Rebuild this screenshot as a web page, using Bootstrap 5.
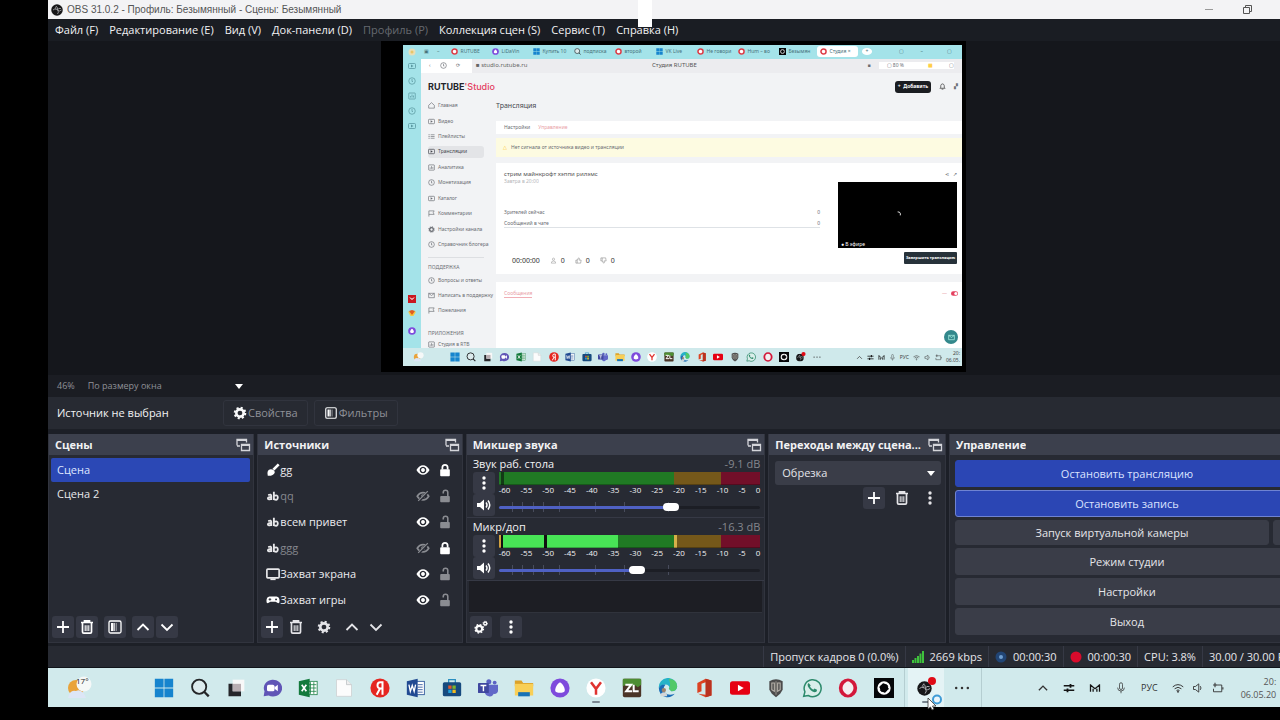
<!DOCTYPE html>
<html lang="ru">
<head>
<meta charset="utf-8">
<meta name="viewport" content="width=device-width, initial-scale=1">
<title>OBS 31.0.2</title>
<link href="https://cdn.jsdelivr.net/npm/bootstrap@5.3.0/dist/css/bootstrap.min.css" rel="stylesheet">
<style>
:root{--ui:"Open Sans","Noto Sans",sans-serif;--dock:#272a33;--head:#3c404d;--key:#3a3d48}
html,body{background:#000}
body{font-family:var(--ui);font-size:11px;line-height:16px;color:#f2f2f4;overflow:hidden;min-height:100vh}
svg{display:block;flex:none}
.ic{width:16px;height:16px}
.ic-m{width:14px;height:14px}
.ic-s{width:12px;height:12px}
.ic-l{width:20px;height:20px}
button{font-family:inherit}
.screen{margin-left:48px;margin-right:-26px;position:relative}
.titlebar{background:#f3f3f5;color:#555;height:19px;font:10px/16px "Liberation Sans",sans-serif;padding:0 40px 0 3px}
.titlebar .win{width:38px;height:19px;background:none;border:0;padding:0}
.menus{background:#1a1d23;height:22px;padding-left:7px;gap:11px}
.menus a{color:#f2f2f4;text-decoration:none;white-space:nowrap}
.menus a.off{color:#666a70}
.white-tab{position:absolute;left:590px;top:0;width:14px;height:27px;background:#fff}
.stage{background:#15171c;padding:0 7px 3px 0}
.canvas-box{background:#000;padding:4px 4px 6px 22px;width:585px}
.zoombar{background:#1b1d23;height:22px;padding-left:9px;font-size:9px;color:#8f9197;gap:12px}
.zoombar select{background-color:transparent;color:#8f9197;border:0;font-size:9px;width:162px;padding:0 0 0 1px;line-height:16px;height:18px}
select.drop{background-image:url("data:image/svg+xml,%3Csvg xmlns='http://www.w3.org/2000/svg' viewBox='0 0 8 5'%3E%3Cpath d='M0 0h8L4 5z' fill='%23fff'/%3E%3C/svg%3E");background-size:8px 5px;background-repeat:no-repeat;background-position:right 6px center;box-shadow:none}
.srcbar{background:#272a32;height:33px;padding-left:9px;border-bottom:1px solid #1d2027;gap:6px}
.srcbar .tag{width:160px}
.ghost{background:#272a32;border:1px solid #31343e;color:#8e9097;border-radius:3px;height:26px;line-height:16px;padding:0 9px;display:flex;align-items:center;gap:1px}
.docks{background:#1c1f27;padding:4px 0 0;gap:3px;height:213px}
.dock{background:var(--dock);min-width:0;display:flex;flex-direction:column;border:solid #31343e;border-width:0 1px 1px}
.dock>header{background:var(--head);height:21px;flex:none;padding:0 2px 0 6px;font-weight:700;display:flex;align-items:center;justify-content:space-between;white-space:nowrap}
.dock>header span{overflow:hidden;text-overflow:ellipsis}
.d1{flex:206 1 0}.d2{flex:205 1 0}.d3{flex:300 1 0}.d4{flex:177 1 0}.d5{flex:358 1 0}
.scenes{padding:3px 3px 0 2px}
.scenes button{display:block;width:100%;height:24px;border:0;background:none;color:#e8e8ec;text-align:left;padding:0 6px;border-radius:2px}
.scenes button.on{background:#2b48b5;color:#dfe6ff}
.tools{height:29px;flex:none;padding:0 3px 1px;gap:2px}
.sq{width:22px;height:22px;border:0;border-radius:3px;background:none;color:#e4e4e8;padding:0;display:flex;align-items:center;justify-content:center}
.sq.key{background:#363945;color:#fff}
.sources{list-style:none;margin:0;padding:2px 10px 0 8px}
.sources li{height:26px;display:flex;align-items:center}
.sources .name{flex:1;color:#ececf0}
.sources .dim{color:#85878e}
.sources .ic-m+.ic-m{margin-left:8px}
.chan{height:63px;flex:none;padding:1px 4px 0 6px;border-bottom:1px solid #363945}
.chan .db{color:#85878e}
.meter{height:13px;display:flex}
.meter i{height:13px;box-shadow:inset 0 -7px 0 -6px #0004}
.scale{font-size:8px;line-height:10px;height:12px;display:flex;justify-content:space-between}
.vol{-webkit-appearance:none;appearance:none;width:100%;height:14px;display:block;margin:3px 0 0;background-color:transparent;background-image:linear-gradient(#484c5c,#484c5c),linear-gradient(#484c5c,#484c5c),linear-gradient(#484c5c,#484c5c),linear-gradient(#484c5c,#484c5c),linear-gradient(#484c5c,#484c5c),linear-gradient(#484c5c,#484c5c),linear-gradient(#484c5c,#484c5c),linear-gradient(#484c5c,#484c5c);background-size:1px 10px;background-repeat:no-repeat;background-position:5% 50%,9% 50%,13% 50%,17% 50%,23% 50%,37% 50%,48% 50%,65% 50%}
.vol::-webkit-slider-runnable-track{height:3px;border-radius:2px;background:linear-gradient(90deg,#4f61c4 var(--v),#1c1e25 var(--v))}
.vol::-webkit-slider-thumb{-webkit-appearance:none;width:16px;height:8px;margin-top:-3px;border-radius:4px;background:#fff}
.pit{background:#1d1e24;flex:1;margin:0 2px;border-bottom:1px solid #30333c}
.trans{padding:6px 4px 0 6px}
.trans select{background-color:var(--key);color:#e4e4e8;border:0;border-radius:3px;height:24px;width:100%;font-size:11px;line-height:16px;padding:0 7px}
.trans .keys{gap:6px;margin-top:2px}
.acts{padding:5px 6px 7px 5px;gap:3px;flex:1}
.act{flex:1;background:var(--key);border:1px solid var(--key);border-radius:3px;color:#e6e6ea;line-height:16px;padding:0;min-height:0;width:100%}
.act.on{background:#2b46b4;border-color:#2b46b4;color:#dbe3ff}
.act.sel{border-color:#6f83d2}
.act-pair{flex:1;display:flex;gap:4px;min-height:0}
.act.mini-key{flex:none;width:26px}
.status{background:#272a32;height:24px;border-top:3px solid #1d2027;color:#e6e6ea;white-space:nowrap}
.status div{padding:0 6px;border-left:1px solid #363945;display:flex;align-items:center;gap:6px}
.status div:last-child{padding-right:10px}
.taskbar{background:#d1eaec;height:40px;border-top:1px solid #10141a;padding-left:16px;color:#222}
.tb{width:36px;height:39px;border:0;background:none;padding:0;display:flex;align-items:center;justify-content:center;position:relative}
.tb.run::after{content:"";position:absolute;bottom:4px;left:14px;width:8px;height:2px;border-radius:1px;background:#7a8790}
.weather{width:82px}
.temp{position:absolute;left:12px;top:0;font-size:8px;line-height:10px}
.obsgrp{border:solid #b5ced1;border-width:0 1px;padding:0 1px 0 3px;margin-left:2px}
.obsgrp .tb.run{background:#e4f3f5}
.tray{color:#333;font-size:9px;margin-left:55px;gap:14px}
.tray .trio{gap:8px}
.clock{font-size:9px;line-height:13px;text-align:right;color:#555;margin-left:3px}
.cursor{position:absolute;left:879px;top:693px;width:18px;height:18px}
/* captured desktop shown in the preview */
.mini{background:#f2f3f5;color:#6b6e74;font-size:5px;line-height:7px;height:321px;overflow:hidden;font-family:"Noto Sans",sans-serif}
.mini svg{width:7px;height:7px}
.m-rail{width:18px;background:#a4e3e9;color:#5b99a2;padding:3px 0 13px}
.m-rail svg{width:8px;height:8px}
.m-rail .set{gap:7px;margin-top:6px}
.m-rail .set2{gap:6px}
.m-tabs{height:14px;background:#a4e3e9;padding:0 10px 0 3px;color:#47717a}
.m-tab{width:41px;display:flex;align-items:center;gap:3px;overflow:hidden;white-space:nowrap;padding-left:3px}
.m-tab.now{background:#fff;border-radius:3px;height:11px}
.m-addr{height:14px;background:#ececef;padding-right:8px}
.m-nav{width:51px;gap:9px}
.m-url{font-size:6px;color:#666;width:180px}
.m-side{width:75px;padding:8px 0 0 7px}
.m-logo{font:700 9px/12px Inter,sans-serif;color:#23242b}
.m-logo b{color:#e4405f;font-weight:500}
.m-side a{display:flex;align-items:center;gap:3px;height:15px;color:#6b6e74;text-decoration:none;white-space:nowrap}
.m-side nav{display:flex;flex-direction:column}
.m-side nav.top{padding-top:7px;height:158px;justify-content:space-between;margin-right:12px}
.m-side nav.top a{height:12px}
.m-side a.now{background:#e3e4e7;border-radius:3px;color:#44464d}
.m-sep{border-top:1px solid #dddfe2;margin:6px 12px 2px 0;padding-top:6px}
.m-h{font-size:7px;line-height:10px;color:#44464d;margin:8px 0 10px}
.m-white{background:#fff}
.m-tabrow{height:13px}
.m-card{height:111px;padding:4px 5px 0 8px}
.m-warn{background:#fdfbe1;height:19px;margin:4px 0 6px;padding-left:7px;gap:4px}
.m-add{background:#1b1d21;color:#fff;border:0;border-radius:3px;font-size:5px;line-height:7px;height:12px;width:36px;padding:0;font-weight:700}
.m-stop{background:#27323a;color:#fff;border:0;border-radius:1px;font-size:4px;line-height:7px;height:12px;width:53px;padding:0;font-weight:700;white-space:nowrap}
.m-info{width:316px}
.m-name{font-size:6px;color:#555}
.m-count{font-size:7px;line-height:10px;color:#333;gap:10px}
.m-video{background:#000;height:66px;width:119px;color:#fff;position:relative}
.m-video svg{position:absolute;left:57px;top:29px}
.m-live{position:absolute;left:3px;bottom:0}
.m-task{background:#cfe9eb;height:18px;padding:0 2px 0 8px;color:#444}
.m-icons{width:372px;margin-left:25px;display:flex;justify-content:space-between}
.m-icons svg{width:10px;height:10px}
.m-task .m-sun{width:14px;height:10px}
.m-chat{width:14px;height:14px;border-radius:50%;background:#33888c;border:0;padding:0;color:#bfe}
.pink{color:#e9a0a6}
</style>
</head>
<body>
<svg width="0" height="0" class="position-absolute" aria-hidden="true">
<defs>
<symbol id="plus" viewBox="0 0 16 16"><path d="M8 2v12M2 8h12" stroke="currentColor" stroke-width="1.800"/></symbol>
<symbol id="trash" viewBox="0 0 16 16"><path d="M2 3.500h12M5.500 3V1.800h5V3M3.500 4v9q0 1.200 1.200 1.200h6.600q1.200 0 1.200-1.200V4" fill="none" stroke="currentColor" stroke-width="1.700"/><path d="M6.200 6.200v5.800M8 6.200v5.800M9.800 6.200v5.800" stroke="currentColor" stroke-width="1.100"/></symbol>
<symbol id="filt" viewBox="0 0 16 16"><rect x="2" y="2" width="12" height="12" rx="1.500" fill="none" stroke="currentColor" stroke-width="1.300"/><path d="M4 4h2.500v8H4z" fill="currentColor"/><path d="M7.500 4v8" stroke="currentColor" stroke-width="1.500" opacity=".7"/><path d="M9.500 4v8" stroke="currentColor" opacity=".4"/></symbol>
<symbol id="up" viewBox="0 0 16 16"><path d="M2.500 11 8 5.500l5.500 5.500" fill="none" stroke="currentColor" stroke-width="1.800"/></symbol>
<symbol id="down" viewBox="0 0 16 16"><path d="M2.500 5.500 8 11l5.500-5.500" fill="none" stroke="currentColor" stroke-width="1.800"/></symbol>
<symbol id="gear" viewBox="0 0 16 16"><circle cx="8" cy="8" r="4.200" fill="none" stroke="currentColor" stroke-width="3"/><circle cx="8" cy="8" r="6" fill="none" stroke="currentColor" stroke-width="2.400" stroke-dasharray="2.360 2.350"/></symbol>
<symbol id="gears" viewBox="0 0 16 16"><circle cx="6" cy="10" r="3.300" fill="none" stroke="currentColor" stroke-width="2.400"/><circle cx="6" cy="10" r="4.800" fill="none" stroke="currentColor" stroke-width="1.600" stroke-dasharray="1.880 1.890"/><circle cx="12.800" cy="4" r="1.700" fill="none" stroke="currentColor" stroke-width="1.500"/><circle cx="12.800" cy="4" r="2.600" fill="none" stroke="currentColor" stroke-dasharray="1 1.040"/></symbol>
<symbol id="dots" viewBox="0 0 16 16"><g fill="currentColor"><circle cx="8" cy="3" r="1.700"/><circle cx="8" cy="8" r="1.700"/><circle cx="8" cy="13" r="1.700"/></g></symbol>
<symbol id="pop" viewBox="0 0 16 16"><path d="M2 8.500V2.500h9.500v3M2 3h9.500M5 9H2M6.500 7.500h8v6h-8z" fill="none" stroke="#d4d5da" stroke-width="1.300"/><path d="M2 3h9.500M6.500 8h8" stroke="#d4d5da" stroke-width="2"/></symbol>
<symbol id="eye" viewBox="0 0 16 16"><path fill-rule="evenodd" d="M.5 8Q3.500 2.500 8 2.500t7.500 5.500Q12.500 13.500 8 13.500T.5 8zM8 4.200a3.800 3.800 0 1 0 .01 0zM8 5.800a2.200 2.200 0 1 1-.01 0z" fill="#fff"/></symbol>
<symbol id="eyeoff" viewBox="0 0 16 16"><path d="M1.500 8.300Q4 4 8 4t6.500 4.300Q12 12.500 8 12.500T1.500 8.300z" fill="none" stroke="#8a8c92" stroke-width="2"/><circle cx="8" cy="8.200" r="2.200" fill="#8a8c92"/><path d="M3 14 14 3" stroke="#272a33" stroke-width="3"/><path d="M2.500 13.500 13.500 2.500" stroke="#8a8c92" stroke-width="1.400"/></symbol>
<symbol id="lock" viewBox="0 0 16 16"><rect x="2.500" y="7" width="11" height="8" rx="1" fill="#fff"/><path d="M5 7.500V5a3 3 0 0 1 6 0v2.500" fill="none" stroke="#fff" stroke-width="2"/></symbol>
<symbol id="unlock" viewBox="0 0 16 16"><rect x="2.500" y="8" width="11" height="7" rx="1" fill="#8a8c92"/><path d="M6 5V4a2.600 2.600 0 0 1 5.200 0v4.500" fill="none" stroke="#8a8c92" stroke-width="1.800"/></symbol>
<symbol id="brush" viewBox="0 0 16 16"><path d="m14.500 1.500-6 6" stroke="#fff" stroke-width="3"/><path d="M2 14.500q-1.500-7 3.500-7.500 4.500.3 4.500 4-1.500 3.800-8 3.500z" fill="#fff"/></symbol>
<symbol id="ab" viewBox="0 0 16 16"><path d="M2.500 7q3.500-1.500 3.500 1v4.500M6 9.300H4Q2 9.500 2.200 11t3.600.2M9 3v9.500M9 8q4.500-2 4.500 1.800T9 11.500" fill="none" stroke="#e8e8ea" stroke-width="2.100"/></symbol>
<symbol id="monitor" viewBox="0 0 16 16"><rect x="1" y="2.500" width="14" height="10" rx="1" fill="none" stroke="#e8e8ea" stroke-width="1.900"/><path d="M5 14h6" stroke="#e8e8ea" stroke-width="2"/></symbol>
<symbol id="pad" viewBox="0 0 16 16"><path d="M4 4h8q3.500.5 3.500 5 0 3-2 2.500L11 10H5l-2.500 1.500Q.5 12 .5 9 .5 4.500 4 4z" fill="#fff"/><path d="M3 7.300h3M4.500 5.800v3" stroke="#272a33"/><circle cx="11.500" cy="7.300" r="1.100" fill="#272a33"/></symbol>
<symbol id="speak" viewBox="0 0 16 16"><path d="M1 6h3l4-3.500v11L4 10H1z" fill="currentColor"/><path d="M10 5.500q2 2.500 0 5M12 3.500q3.500 4.500 0 9" fill="none" stroke="currentColor" stroke-width="1.500"/></symbol>
<symbol id="obs" viewBox="0 0 24 24"><circle cx="12" cy="12" r="11.500" fill="#171719"/><path d="M11 4q-4 4 0 7-3-3-7 1M20 9q-5-2-7 3 1-5-2-7M13 20q4-4 0-8 4 4 8 0" fill="none" stroke="#b5b5b9" stroke-width="1.500"/></symbol>
<symbol id="win" viewBox="0 0 24 24"><path d="M1 1h10.500v10.500H1zM12.500 1H23v10.500H12.500zM1 12.500h10.500V23H1zM12.500 12.500H23V23H12.500z" fill="#1684ce"/></symbol>
<symbol id="find" viewBox="0 0 24 24"><circle cx="11" cy="10.500" r="8.500" fill="#dcebed" stroke="#242628" stroke-width="2.200"/><path d="m17 16.500 5.500 5.500" stroke="#242628" stroke-width="2.800"/></symbol>
<symbol id="desk" viewBox="0 0 24 24"><path d="M8 2h14v14H8z" fill="#f8f8f8"/><path d="M3 7h5v9h10v6H3z" fill="#26262a"/><path d="M8 7h10v9H8z" fill="#b9aeb2"/></symbol>
<symbol id="chat" viewBox="0 0 24 24"><path d="M2 22 3 16A11 10 0 1 1 8 21z" fill="#6055b6"/><rect x="6" y="8" width="9" height="8" rx="2" fill="#fff"/><path d="m15 11 4-3v8l-4-3z" fill="#fff"/></symbol>
<symbol id="xls" viewBox="0 0 24 24"><rect x="11" y="4" width="12" height="16" fill="#fff" stroke="#23854a"/><path d="M15 5v14M19 5v14M13 8h9M13 12h9M13 16h9" stroke="#23854a"/><path d="m1 4 13-3v22L1 20z" fill="#137a3b"/><path d="m4.500 8 5.500 8M10 8l-5.500 8" stroke="#fff" stroke-width="2"/></symbol>
<symbol id="file" viewBox="0 0 24 24"><path d="M3 2h12l6 6v14H3z" fill="#fcfcfc" stroke="#cfd3d4"/><path d="M15 2v6h6" fill="#eee" stroke="#bfc4c6"/></symbol>
<symbol id="ya" viewBox="0 0 24 24"><circle cx="12" cy="12" r="11.500" fill="#e52620"/><path d="M15 20V5h-2.500Q9 5 9 8.800t3.500 3.700H15M12 12.500 8 20" fill="none" stroke="#fff" stroke-width="2.400"/></symbol>
<symbol id="doc" viewBox="0 0 24 24"><rect x="11" y="4" width="11" height="16" fill="#fff" stroke="#254f96"/><path d="M14 8h6M14 11h6M14 14h6M14 17h6" stroke="#254f96"/><path d="m1 4 13-3v22L1 20z" fill="#214a92"/><path d="m3.500 8 1.700 8L7.500 9l2.300 7 1.700-8" fill="none" stroke="#fff" stroke-width="1.600"/></symbol>
<symbol id="store" viewBox="0 0 24 24"><path d="M8 6V2h8v4" fill="none" stroke="#2a8ec0" stroke-width="1.500"/><rect x="1" y="5" width="22" height="17" rx="2" fill="#164a7e"/><path d="M7.500 9h4v4h-4z" fill="#e2572d"/><path d="M12.500 9h4v4h-4z" fill="#80b62b"/><path d="M7.500 14h4v4h-4z" fill="#22a2dc"/><path d="M12.500 14h4v4h-4z" fill="#f0ba20"/></symbol>
<symbol id="teams" viewBox="0 0 24 24"><circle cx="13" cy="4.500" r="3" fill="#5b62c4"/><circle cx="20" cy="5.500" r="2.300" fill="#5b62c4"/><path d="M8 8h16v8q-1 4-5 3-2 4-6 3-4-1-5-5z" fill="#6168c8"/><rect y="6" width="13" height="12" rx="1" fill="#3f479f"/><path d="M3 9h7M6.500 9v7" stroke="#fff" stroke-width="1.700"/></symbol>
<symbol id="folder" viewBox="0 0 24 24"><path d="M1 3h8l2 3h12v4H1z" fill="#dca22a"/><path d="M1 7h22v14H1z" fill="#f8cf56"/><path d="M5 17h14v5H5z" fill="#1772b5"/></symbol>
<symbol id="alice" viewBox="0 0 24 24"><circle cx="12" cy="12" r="11.500" fill="#7e4bdc"/><path d="M12 5.500q2 0 5 5.500 2 5-1 6-4 1.500-8 0-3-1-1-6 3-5.500 5-5.500z" fill="#fff"/></symbol>
<symbol id="ybr" viewBox="0 0 24 24"><circle cx="12" cy="12" r="11.500" fill="#fff"/><path d="m6 5 6 8 6-8M12 12v8" fill="none" stroke="#df3330" stroke-width="3"/></symbol>
<symbol id="zl" viewBox="0 0 24 24"><rect x="1" y="1" width="22" height="22" rx="2" fill="#4b3527"/><path d="M1 1h22v7l-4 3-4-3-5 3-5-3-4 2z" fill="#4d8d32"/><path d="M4 8h7l-6 8h7M14 8v8h6" fill="none" stroke="#fff" stroke-width="2.400"/></symbol>
<symbol id="edge" viewBox="0 0 24 24"><path d="M1 12A11 11 0 0 1 23 10q0 6-7 6l-3-3q2-3-2-5-6-1-10 4z" fill="#25b3c8"/><path d="M13 1q10 1 10 9 0 6-7 6l-3-3q3-4 0-12z" fill="#52c968"/><path d="M1 12q3-5 8-4-4 4-1 9 4 5 12 2-4 5-10 4Q1 21 1 12z" fill="#176bb6"/><path d="M3 22q0-5 4-5t4 5z" fill="#d2d6d8"/><circle cx="7" cy="14.500" r="2.600" fill="#9b826c"/></symbol>
<symbol id="office" viewBox="0 0 24 24"><path d="m14 1 7 2v18l-7 2-9-4 9 1V5L9 7v9l-5 2V6z" fill="#dc4222"/><path d="m14 1 7 2v18l-7 2z" fill="#b93220"/></symbol>
<symbol id="yt" viewBox="0 0 24 24"><rect y="4" width="24" height="16" rx="3" fill="#e60012"/><path d="m9.500 8 7 4-7 4z" fill="#fff"/></symbol>
<symbol id="wot" viewBox="0 0 24 24"><path d="M4 4q8-5 16 0v10l-3 5-5 4-5-4-3-5z" fill="#4b4b4b"/><path d="M7 6v8l3 2V6zM14 6v10l3-2V6z" fill="none" stroke="#b9b4ac" stroke-width="1.300"/><path d="M12 4v16" stroke="#8b8781" stroke-width="1.500"/></symbol>
<symbol id="wa" viewBox="0 0 24 24"><path d="m2 22 1.500-5.500A10.200 10.200 0 1 1 7.500 21z" fill="#d9eeea" stroke="#2d8a6c" stroke-width="1.800"/><path d="M8 6q-2 1-1 4 3 6 8 7 3 0 3-3l-3-1.500-1.500 1.500q-3-1-4-4L10.500 9z" fill="#2d8a6c"/></symbol>
<symbol id="opera" viewBox="0 0 24 24"><ellipse cx="12" cy="12" rx="8.800" ry="9.300" fill="#f4eef0" stroke="#d3183a" stroke-width="4.400"/><ellipse cx="12" cy="12" rx="4.800" ry="8" fill="#f4eef0"/></symbol>
<symbol id="cam" viewBox="0 0 24 24"><path d="M0 0h24v24H0z" fill="#050608"/><circle cx="12" cy="12" r="6.500" fill="none" stroke="#fff" stroke-width="3"/><circle cx="12" cy="12" r="5" fill="none" stroke="#050608" stroke-width="1.200" stroke-dasharray="2.500 2.700"/></symbol>
<symbol id="more" viewBox="0 0 24 24"><g fill="#333"><circle cx="5" cy="12" r="1.500"/><circle cx="12" cy="12" r="1.500"/><circle cx="19" cy="12" r="1.500"/></g></symbol>
<symbol id="sun" viewBox="0 0 28 24"><circle cx="12" cy="12" r="8" fill="#e9a33a"/><path d="M4 22q2-9 8-7 6-3 10 7z" fill="#dde6f6"/><circle cx="20" cy="8" r="7.500" fill="#f5f8f8"/></symbol>
<symbol id="home" viewBox="0 0 16 16"><path d="m1.500 7.500 6.500-6 6.500 6V14h-13z" fill="none" stroke="currentColor" stroke-width="1.500"/></symbol>
<symbol id="vid" viewBox="0 0 16 16"><rect x="1" y="3" width="14" height="10" rx="2" fill="none" stroke="currentColor" stroke-width="1.600"/><path d="m6 5 5 3-5 3z" fill="currentColor"/></symbol>
<symbol id="list" viewBox="0 0 16 16"><path d="M1 4h3m2 0h9M1 8h3m2 0h9M1 12h3m2 0h9" stroke="currentColor" stroke-width="1.500"/></symbol>
<symbol id="circ" viewBox="0 0 16 16"><circle cx="8" cy="8" r="6.500" fill="none" stroke="currentColor" stroke-width="1.500"/><path d="M8 4v5h2" fill="none" stroke="currentColor" stroke-width="1.500"/></symbol>
<symbol id="bell" viewBox="0 0 16 16"><path d="M2 12h12l-2-2V6q-1-4-4-4T4 6v4zM6 14h4" fill="none" stroke="#333" stroke-width="1.600"/></symbol>
<symbol id="bars" viewBox="0 0 16 16"><rect x="1.500" y="2" width="13" height="12" rx="1" fill="none" stroke="currentColor" stroke-width="1.500"/><path d="M5 11V8m3 3V5m3 6V7" stroke="currentColor" stroke-width="1.500"/></symbol>
<symbol id="mail" viewBox="0 0 16 16"><path d="M1.500 3h13v10h-13zl6.500 5 6.500-5" fill="none" stroke="currentColor" stroke-width="1.500"/></symbol>
<symbol id="flag" viewBox="0 0 16 16"><path d="M2 15V2h12l-2 4 2 4H2" fill="none" stroke="currentColor" stroke-width="1.500"/></symbol>
<symbol id="people" viewBox="0 0 16 16"><circle cx="8" cy="5" r="2.500" fill="none" stroke="#999" stroke-width="1.300"/><path d="M3 14q0-5 5-5t5 5z" fill="none" stroke="#999" stroke-width="1.300"/></symbol>
<symbol id="thumb" viewBox="0 0 16 16"><path d="M2 7h3v7H2zM5 7l3-5 2 1-1 4h5l-1 7H5" fill="none" stroke="#888" stroke-width="1.300"/></symbol>
<symbol id="thumbdn" viewBox="0 0 16 16"><path d="M2 9h3V2H2zM5 9l3 5 2-1-1-4h5l-1-7H5" fill="none" stroke="#888" stroke-width="1.300"/></symbol>
<symbol id="reddot" viewBox="0 0 16 16"><circle cx="8" cy="8" r="5.800" fill="#fff" stroke="#dd3b46" stroke-width="3.500"/></symbol>
<symbol id="mic" viewBox="0 0 16 16"><rect x="6" y="1" width="4" height="9" rx="2" fill="none" stroke="currentColor"/><path d="M3.500 7.500q0 4.500 4.500 4.500t4.500-4.500M8 12v3" fill="none" stroke="currentColor"/></symbol>
<symbol id="wifi" viewBox="0 0 16 16"><path d="M1 6.500q7-6 14 0M3.500 9q4.500-4 9 0M6 11.500q2-2 4 0" fill="none" stroke="currentColor" stroke-width="1.300"/><circle cx="8" cy="13" r="1.200" fill="currentColor"/></symbol>
<symbol id="vol" viewBox="0 0 16 16"><path d="M2 6h2.500L9 2.500v11L4.500 10H2z" fill="none" stroke="currentColor" stroke-width="1.200"/><path d="M11 5.500q2 2.500 0 5" fill="none" stroke="currentColor" stroke-width="1.200"/></symbol>
<symbol id="batt" viewBox="0 0 16 16"><path d="M6 4h7v9H2V9" fill="none" stroke="currentColor" stroke-width="1.200"/><path d="M14.500 7v3M4 1v6M1.500 4h5" stroke="currentColor" stroke-width="1.400"/></symbol>
<symbol id="sl" viewBox="0 0 16 16"><path d="M1 5h14M1 11h14" stroke="#151515" stroke-width="1.800"/><path d="M10 2.500v5M6 8.500v5" stroke="#151515" stroke-width="2.400"/></symbol>
<symbol id="mm" viewBox="0 0 16 16"><path d="M2 3v10M14 3v10M2 4l6 5 6-5M5.500 9v4M10.500 9v4" fill="none" stroke="#151515" stroke-width="1.700"/></symbol>
</defs></svg>

<div class="screen">
<div class="titlebar d-flex align-items-center"><svg class="ic-s"><use href="#obs"/></svg><span class="flex-fill ms-1">OBS 31.0.2 - Профиль: Безымянный - Сцены: Безымянный</span>
<button class="win" aria-label="Свернуть"><svg viewBox="0 0 38 19" width="38" height="19"><path d="M15 9.500h8" stroke="#999"/></svg></button><button class="win" aria-label="Развернуть"><svg viewBox="0 0 38 19" width="38" height="19"><path d="M15.500 7.500h6v6h-6zM17.500 7.500v-2h6v6h-2" fill="none" stroke="#555"/></svg></button></div>

<nav class="menus d-flex align-items-center"><a href="#">Файл (F)</a><a href="#">Редактирование (E)</a><a href="#">Вид (V)</a><a href="#">Док-панели (D)</a><a href="#" class="off">Профиль (P)</a><a href="#">Коллекция сцен (S)</a><a href="#">Сервис (T)</a><a href="#">Справка (H)</a></nav>
<div class="white-tab"></div>

<main>
<div class="stage d-flex justify-content-center"><div class="canvas-box"><div class="mini d-flex flex-column">
<div class="d-flex flex-fill overflow-hidden">
<div class="m-rail d-flex flex-column align-items-center"><svg viewBox="0 0 16 16"><circle cx="8" cy="8" r="7" fill="#e8dfb8"/><circle cx="8" cy="8" r="3" fill="#e7c66a"/></svg><div class="set d-flex flex-column flex-fill"><svg><use href="#vid"/></svg><svg><use href="#circ"/></svg><svg><use href="#bars"/></svg><svg><use href="#circ"/></svg><svg><use href="#vid"/></svg></div>
<div class="set2 d-flex flex-column"><svg viewBox="0 0 16 16"><path d="M0 0h16v16H0z" fill="#c91820"/><path d="M4 5q4 7 8 0" fill="none" stroke="#fff" stroke-width="2"/></svg><svg viewBox="0 0 16 16"><path d="M0 5h16l-5 9H5z" fill="#f5c842"/><path d="m2 4 6-2 6 2-6 8z" fill="#e05c20"/></svg><svg class="mt-1"><use href="#alice"/></svg></div></div>
<div class="flex-fill overflow-hidden d-flex flex-column">
<div class="m-tabs d-flex align-items-center"><span class="me-1">▣</span><span class="px-1">–</span>
<div class="m-tab ms-1"><svg><use href="#reddot"/></svg>RUTUBE</div><div class="m-tab"><svg><use href="#alice"/></svg>LiDaVin</div><div class="m-tab"><svg><use href="#win"/></svg>Купить 10</div><div class="m-tab"><svg><use href="#find"/></svg>подписка</div><div class="m-tab"><svg><use href="#reddot"/></svg>второй</div><div class="m-tab"><svg><use href="#win"/></svg>VK Live</div><div class="m-tab"><svg><use href="#reddot"/></svg>Не говори</div><div class="m-tab"><svg><use href="#reddot"/></svg>Hum – во</div><div class="m-tab"><svg><use href="#cam"/></svg>Безымян</div><div class="m-tab now"><svg><use href="#reddot"/></svg>Студия ×</div><span class="bg-white rounded-circle px-1 ms-1">+</span><span class="ms-auto me-3">▢</span><span class="me-4">–</span><span>▢</span></div>
<div class="m-addr d-flex align-items-center"><div class="m-nav bg-white h-100 d-flex align-items-center ps-2"><span>‹</span><svg><use href="#circ"/></svg><span>⟳</span></div><span class="m-url ps-1">■ studio.rutube.ru</span><span class="m-name">Студия RUTUBE</span><span class="ms-auto me-2">■</span><span class="bg-white px-2">▢ 80 %</span><span class="bg-white px-3 text-warning">▩</span><span class="bg-white">▢</span></div>
<div class="d-flex flex-fill overflow-hidden">
<div class="m-side"><div class="m-logo">RUTUBE<b>'Studio</b></div>
<nav class="top"><a href="#"><svg><use href="#home"/></svg>Главная</a><a href="#"><svg><use href="#vid"/></svg>Видео</a><a href="#"><svg><use href="#list"/></svg>Плейлисты</a><a href="#" class="now"><svg><use href="#vid"/></svg>Трансляции</a><a href="#"><svg><use href="#bars"/></svg>Аналитика</a><a href="#"><svg><use href="#circ"/></svg>Монетизация</a><a href="#"><svg><use href="#vid"/></svg>Каталог</a><a href="#"><svg><use href="#flag"/></svg>Комментарии</a><a href="#"><svg><use href="#gear"/></svg>Настройки канала</a><a href="#"><svg><use href="#circ"/></svg>Справочник блогера</a></nav>
<div class="m-sep">ПОДДЕРЖКА</div>
<nav><a href="#"><svg><use href="#circ"/></svg>Вопросы и ответы</a><a href="#"><svg><use href="#mail"/></svg>Написать в поддержку</a><a href="#"><svg><use href="#flag"/></svg>Пожелания</a></nav>
<div class="mt-2 pt-1">ПРИЛОЖЕНИЯ</div><nav><a href="#"><svg><use href="#bars"/></svg>Студия в RTB</a></nav></div>
<div class="flex-fill d-flex flex-column">
<div class="d-flex justify-content-end align-items-center gap-2 pt-2 pe-1"><button class="m-add">+ &nbsp;Добавить</button><svg><use href="#bell"/></svg><span>▞</span></div>
<div class="m-h">Трансляция</div>
<div class="m-white m-tabrow d-flex align-items-center ps-2"><span class="me-2">Настройки</span><span class="pink">Управление</span></div>
<div class="m-warn d-flex align-items-center"><span class="text-warning">△</span>Нет сигнала от источника видео и трансляции</div>
<div class="m-white m-card d-flex justify-content-between">
<div class="m-info d-flex flex-column"><div class="m-name mt-1">стрим майнкрофт хэппи рилэмс</div><div class="opacity-50">Завтра в 20:00</div>
<div class="d-flex justify-content-between mt-4">Зрителей сейчас<span>0</span></div><div class="d-flex justify-content-between mt-1 border-bottom">Сообщений в чате<span>0</span></div>
<div class="m-count d-flex mt-auto mb-2"><span class="ps-2">00:00:00</span><span class="d-flex align-items-center gap-1"><svg><use href="#people"/></svg>0</span><span class="d-flex align-items-center gap-1"><svg><use href="#thumb"/></svg>0</span><span class="d-flex align-items-center gap-1"><svg><use href="#thumbdn"/></svg>0</span></div></div>
<div class="d-flex flex-column align-items-end"><div class="mb-1 mt-1">⋖ &nbsp; ↗</div><div class="m-video mb-1"><svg viewBox="0 0 8 8"><path d="M3 1q4 0 3 4" fill="none" stroke="#fff"/></svg><span class="m-live">● В эфире</span></div><button class="m-stop">Завершить трансляцию</button></div></div>
<div class="m-white mt-2 flex-fill ps-2 pe-1 d-flex flex-column pink"><div class="d-flex justify-content-between align-items-center pt-2"><span class="border-bottom border-danger-subtle">Сообщения</span><span class="d-flex align-items-center gap-1">— <svg viewBox="0 0 16 16"><rect y="3" width="16" height="10" rx="5" fill="#e4405f"/><circle cx="11" cy="8" r="3.500" fill="#fff"/></svg></span></div><button class="m-chat mt-auto ms-auto mb-1 d-flex align-items-center justify-content-center" aria-label="Чат"><svg><use href="#mail"/></svg></button></div>
</div></div></div></div>
<div class="m-task d-flex align-items-center"><svg class="m-sun"><use href="#sun"/></svg><div class="m-icons"><svg><use href="#win"/></svg><svg><use href="#find"/></svg><svg><use href="#desk"/></svg><svg><use href="#chat"/></svg><svg><use href="#xls"/></svg><svg><use href="#file"/></svg><svg><use href="#ya"/></svg><svg><use href="#doc"/></svg><svg><use href="#store"/></svg><svg><use href="#teams"/></svg><svg><use href="#folder"/></svg><svg><use href="#alice"/></svg><svg><use href="#ybr"/></svg><svg><use href="#zl"/></svg><svg><use href="#edge"/></svg><svg><use href="#office"/></svg><svg><use href="#yt"/></svg><svg><use href="#wot"/></svg><svg><use href="#wa"/></svg><svg><use href="#opera"/></svg><svg><use href="#cam"/></svg><svg viewBox="0 0 24 24"><use href="#obs" y="4" width="19" height="19"/><circle cx="18" cy="5" r="5" fill="#e00a16"/></svg><svg><use href="#more"/></svg></div><div class="ms-auto d-flex align-items-center gap-1"><svg><use href="#up"/></svg><svg><use href="#sl"/></svg><svg><use href="#mm"/></svg><svg><use href="#mic"/></svg><span>РУС</span><svg><use href="#wifi"/></svg><svg><use href="#vol"/></svg><svg><use href="#batt"/></svg><span class="text-end">20:<br>06.05.</span></div></div>
</div></div></div>

<div class="zoombar d-flex align-items-center"><span>46%</span><select class="drop form-select" aria-label="Масштаб"><option>По размеру окна</option></select></div>
<div class="srcbar d-flex align-items-center"><span class="tag">Источник не выбран</span><button class="ghost"><svg class="ic-m text-light"><use href="#gear"/></svg>Свойства</button><button class="ghost"><svg class="ic-m text-light"><use href="#filt"/></svg>Фильтры</button></div>

<div class="docks d-flex">
<section class="dock d1"><header><span>Сцены</span><svg class="ic"><use href="#pop"/></svg></header><div class="scenes flex-fill"><button class="on">Сцена</button><button>Сцена 2</button></div>
<div class="tools d-flex align-items-center"><button class="sq key" aria-label="Добавить"><svg class="ic"><use href="#plus"/></svg></button><button class="sq key me-1" aria-label="Удалить"><svg class="ic"><use href="#trash"/></svg></button><button class="sq key me-1" aria-label="Фильтры"><svg class="ic"><use href="#filt"/></svg></button><button class="sq key" aria-label="Вверх"><svg class="ic"><use href="#up"/></svg></button><button class="sq key" aria-label="Вниз"><svg class="ic"><use href="#down"/></svg></button></div></section>

<section class="dock d2"><header><span>Источники</span><svg class="ic"><use href="#pop"/></svg></header>
<ul class="sources flex-fill"><li><svg class="ic-m"><use href="#brush"/></svg><span class="name">gg</span><svg class="ic-m"><use href="#eye"/></svg><svg class="ic-m"><use href="#lock"/></svg></li>
<li><svg class="ic-m"><use href="#ab"/></svg><span class="name dim">qq</span><svg class="ic-m"><use href="#eyeoff"/></svg><svg class="ic-m"><use href="#unlock"/></svg></li>
<li><svg class="ic-m"><use href="#ab"/></svg><span class="name">всем привет</span><svg class="ic-m"><use href="#eye"/></svg><svg class="ic-m"><use href="#unlock"/></svg></li>
<li><svg class="ic-m"><use href="#ab"/></svg><span class="name dim">ggg</span><svg class="ic-m"><use href="#eyeoff"/></svg><svg class="ic-m"><use href="#lock"/></svg></li>
<li><svg class="ic-m"><use href="#monitor"/></svg><span class="name">Захват экрана</span><svg class="ic-m"><use href="#eye"/></svg><svg class="ic-m"><use href="#unlock"/></svg></li>
<li><svg class="ic-m"><use href="#pad"/></svg><span class="name">Захват игры</span><svg class="ic-m"><use href="#eye"/></svg><svg class="ic-m"><use href="#unlock"/></svg></li></ul>
<div class="tools d-flex align-items-center"><button class="sq key" aria-label="Добавить"><svg class="ic"><use href="#plus"/></svg></button><button class="sq me-1" aria-label="Удалить"><svg class="ic"><use href="#trash"/></svg></button><button class="sq me-1" aria-label="Свойства"><svg class="ic-m"><use href="#gear"/></svg></button><button class="sq" aria-label="Вверх"><svg class="ic"><use href="#up"/></svg></button><button class="sq" aria-label="Вниз"><svg class="ic"><use href="#down"/></svg></button></div></section>

<section class="dock d3"><header><span>Микшер звука</span><svg class="ic"><use href="#pop"/></svg></header>
<div class="chan"><div class="d-flex justify-content-between"><label for="v1">Звук раб. стола</label><span class="db">-9.1 dB</span></div>
<div class="d-flex gap-1"><div class="d-flex flex-column"><button class="sq key" aria-label="Меню"><svg class="ic"><use href="#dots"/></svg></button><button class="sq key" aria-label="Звук"><svg class="ic"><use href="#speak"/></svg></button></div>
<div class="flex-fill"><div class="meter"><i style="width:1%;background:#237a28"></i><i style="width:1%;background:#123a16"></i><i style="width:65%;background:#207a24"></i><i style="width:18%;background:#75581a"></i><i style="width:15%;background:#720f29"></i></div>
<div class="scale"><span>-60</span><span>-55</span><span>-50</span><span>-45</span><span>-40</span><span>-35</span><span>-30</span><span>-25</span><span>-20</span><span>-15</span><span>-10</span><span>-5</span><span>0</span></div><input id="v1" class="vol" type="range" min="0" max="100" value="67" style="--v:67%"></div></div></div>
<div class="chan"><div class="d-flex justify-content-between"><label for="v2">Микр/доп</label><span class="db">-16.3 dB</span></div>
<div class="d-flex gap-1"><div class="d-flex flex-column"><button class="sq key" aria-label="Меню"><svg class="ic"><use href="#dots"/></svg></button><button class="sq key" aria-label="Звук"><svg class="ic"><use href="#speak"/></svg></button></div>
<div class="flex-fill"><div class="meter"><i style="width:1%;background:#d0a040"></i><i style="width:.5%;background:#111"></i><i style="width:16%;background:#48e456"></i><i style="width:.8%;background:#111"></i><i style="width:27.500%;background:#48e456"></i><i style="width:21.200%;background:#207a24"></i><i style="width:1.300%;background:#d6b04a"></i><i style="width:16.700%;background:#75581a"></i><i style="width:15%;background:#720f29"></i></div>
<div class="scale"><span>-60</span><span>-55</span><span>-50</span><span>-45</span><span>-40</span><span>-35</span><span>-30</span><span>-25</span><span>-20</span><span>-15</span><span>-10</span><span>-5</span><span>0</span></div><input id="v2" class="vol" type="range" min="0" max="100" value="53" style="--v:53%"></div></div></div>
<div class="pit"></div>
<div class="tools d-flex align-items-center gap-2"><button class="sq key" aria-label="Настройки звука"><svg class="ic-m"><use href="#gears"/></svg></button><button class="sq key" aria-label="Меню"><svg class="ic"><use href="#dots"/></svg></button></div></section>

<section class="dock d4"><header><span>Переходы между сцена...</span><svg class="ic"><use href="#pop"/></svg></header>
<div class="trans"><select class="drop form-select" aria-label="Переход"><option>Обрезка</option></select>
<div class="keys d-flex justify-content-end"><button class="sq key" aria-label="Добавить"><svg class="ic"><use href="#plus"/></svg></button><button class="sq" aria-label="Удалить"><svg class="ic"><use href="#trash"/></svg></button><button class="sq" aria-label="Меню"><svg class="ic"><use href="#dots"/></svg></button></div></div></section>

<section class="dock d5"><header><span>Управление</span></header><div class="acts d-flex flex-column"><button class="act on">Остановить трансляцию</button><button class="act on sel">Остановить запись</button><div class="act-pair"><button class="act">Запуск виртуальной камеры</button><button class="act mini-key" aria-label="Настройки камеры"></button></div><button class="act">Режим студии</button><button class="act">Настройки</button><button class="act">Выход</button></div></section>
</div>
</main>

<footer>
<div class="status d-flex justify-content-end"><div>Пропуск кадров 0 (0.0%)</div><div><svg class="ic-s" viewBox="0 0 12 12"><path d="M0 9h2v3H0zM2.500 7h2v5h-2zM5 5h2v7H5zM7.500 2.500h2V12h-2zM10 0h2v12h-2z" fill="#3fc23d"/></svg>2669 kbps</div><div><svg class="ic-s" viewBox="0 0 12 12"><circle cx="6" cy="6" r="5.500" fill="#214575"/><circle cx="6" cy="6" r="2" fill="#6f9fd0"/></svg>00:00:30</div><div><svg class="ic-s" viewBox="0 0 12 12"><circle cx="6" cy="6" r="5.500" fill="#d90b2c"/></svg>00:00:30</div><div>CPU: 3.8%</div><div>30.00 / 30.00 FPS</div></div>
<div class="taskbar d-flex align-items-center"><div class="weather position-relative"><svg width="28" height="24"><use href="#sun"/></svg><span class="temp">17°</span></div>
<button class="tb" aria-label="Пуск"><svg class="ic-l"><use href="#win"/></svg></button><button class="tb" aria-label="Поиск"><svg class="ic-l"><use href="#find"/></svg></button><button class="tb" aria-label="Задачи"><svg class="ic-l"><use href="#desk"/></svg></button><button class="tb" aria-label="Чат"><svg class="ic-l"><use href="#chat"/></svg></button><button class="tb" aria-label="Excel"><svg class="ic-l"><use href="#xls"/></svg></button><button class="tb" aria-label="Файл"><svg class="ic-l"><use href="#file"/></svg></button><button class="tb" aria-label="Яндекс"><svg class="ic-l"><use href="#ya"/></svg></button><button class="tb" aria-label="Word"><svg class="ic-l"><use href="#doc"/></svg></button><button class="tb" aria-label="Магазин"><svg class="ic-l"><use href="#store"/></svg></button><button class="tb" aria-label="Teams"><svg class="ic-l"><use href="#teams"/></svg></button><button class="tb" aria-label="Проводник"><svg class="ic-l"><use href="#folder"/></svg></button><button class="tb" aria-label="Алиса"><svg class="ic-l"><use href="#alice"/></svg></button><button class="tb run" aria-label="Браузер"><svg class="ic-l"><use href="#ybr"/></svg></button><button class="tb" aria-label="ZL"><svg class="ic-l"><use href="#zl"/></svg></button><button class="tb" aria-label="Edge"><svg class="ic-l"><use href="#edge"/></svg></button><button class="tb" aria-label="Office"><svg class="ic-l"><use href="#office"/></svg></button><button class="tb" aria-label="YouTube"><svg class="ic-l"><use href="#yt"/></svg></button><button class="tb" aria-label="Танки"><svg class="ic-l"><use href="#wot"/></svg></button><button class="tb" aria-label="WhatsApp"><svg class="ic-l"><use href="#wa"/></svg></button><button class="tb" aria-label="Opera"><svg class="ic-l"><use href="#opera"/></svg></button><button class="tb" aria-label="Камера"><svg class="ic-l"><use href="#cam"/></svg></button>
<div class="obsgrp d-flex"><button class="tb run" aria-label="OBS"><svg width="24" height="24" viewBox="0 0 24 24"><use href="#obs" x="3" y="5" width="15" height="15"/><circle cx="18" cy="5" r="4" fill="#e00a16"/></svg></button><button class="tb" aria-label="Ещё"><svg class="ic-l"><use href="#more"/></svg></button></div>
<div class="tray d-flex align-items-center"><svg class="ic-s"><use href="#up"/></svg><svg class="ic-s"><use href="#sl"/></svg><svg class="ic-s"><use href="#mm"/></svg><svg class="ic-s"><use href="#mic"/></svg><span>РУС</span><div class="trio d-flex"><svg class="ic-s"><use href="#wifi"/></svg><svg class="ic-s"><use href="#vol"/></svg><svg class="ic-s"><use href="#batt"/></svg></div><div class="clock">20:<br>06.05.20</div></div></div>
</footer>
<svg class="cursor" viewBox="0 0 18 18"><circle cx="10" cy="6.500" r="4" fill="#eaf5fb" stroke="#3f9bd6" stroke-width="2"/><path d="M1 5v11l2.500-2 1.500 3 2-1-1.500-3H9z" fill="#fff" stroke="#333" stroke-width=".8"/></svg>
</div>
</body>
</html>
